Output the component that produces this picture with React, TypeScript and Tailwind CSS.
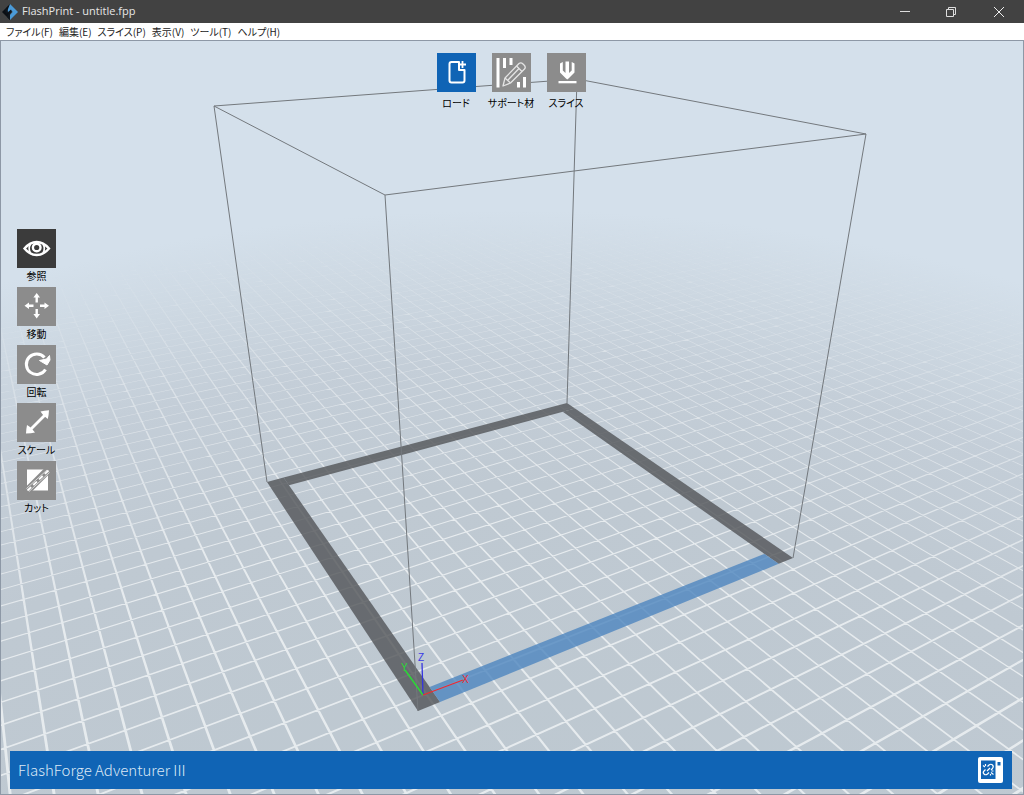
import type { ReactNode } from "react";

type Point = [number, number];

// Perspective projection of the build plate: (0,0) is the origin corner, (1,1) the far corner
const project = (u: number, v: number): Point => {
  const w = 1 + 0.2529 * u + 0.44052 * v;
  return [(575.55 * u - 33.38 * v + 418) / w, (-11.88 * u - 16.67 * v + 711) / w];
};

const quad = (points: Point[]) =>
  "M" + points.map(([u, v]) => project(u, v).map((n) => n.toFixed(2)).join(" ")).join("L") + "Z";

const CELL = 1 / 15;
const HALF_LINE = 0.0023;

const buildGrid = () => {
  const parts: string[] = [];
  for (let i = -75; i < 150; i++) {
    const c = (i + 0.5) * CELL;
    // lines along u
    const u0 = (-0.35 - 0.44052 * c) / 0.2529;
    const u1 = (2.6 - 0.44052 * c) / 0.2529;
    parts.push(quad([[u0, c - HALF_LINE], [u1, c - HALF_LINE], [u1, c + HALF_LINE], [u0, c + HALF_LINE]]));
    // lines along v, same winding so crossings stay filled
    const v0 = (-0.35 - 0.2529 * c) / 0.44052;
    const v1 = (2.6 - 0.2529 * c) / 0.44052;
    parts.push(quad([[c - HALF_LINE, v0], [c + HALF_LINE, v0], [c + HALF_LINE, v1], [c - HALF_LINE, v1]]));
  }
  return parts.join("");
};

const gridPath = buildGrid();
const T = 0.0475;

const Scene = () => (
  <svg
    className="absolute inset-0 w-full h-full"
    viewBox="1 41 1022 753"
    preserveAspectRatio="xMidYMid slice"
    aria-hidden="true"
  >
    <defs>
      <radialGradient id="ground" gradientUnits="userSpaceOnUse" cx="0" cy="0" r="1" gradientTransform="translate(512 900) scale(1140 690)">
        <stop offset="0" stopColor="#bdc8d0" />
        <stop offset="0.6" stopColor="#bfc9d2" />
        <stop offset="0.78" stopColor="#c4ced8" />
        <stop offset="0.9" stopColor="#cdd8e2" />
        <stop offset="1" stopColor="#d4e0eb" />
      </radialGradient>
      <radialGradient id="fog" gradientUnits="userSpaceOnUse" cx="0" cy="0" r="1" gradientTransform="translate(512 900) scale(1140 690)">
        <stop offset="0" stopColor="#fff" />
        <stop offset="0.55" stopColor="#fff" />
        <stop offset="0.8" stopColor="#999" />
        <stop offset="0.92" stopColor="#3c3c3c" />
        <stop offset="1" stopColor="#000" />
      </radialGradient>
      <mask id="fade" maskUnits="userSpaceOnUse" x="0" y="0" width="1024" height="800">
        <rect width="1024" height="800" fill="url(#fog)" />
      </mask>
    </defs>

    <rect width="1024" height="800" fill="url(#ground)" />
    <g mask="url(#fade)">
      <path d={gridPath} fill="#f4f7f8" fillOpacity="0.74" />
    </g>

    {/* Plate frame */}
    <g fill="#54575a" fillOpacity="0.82">
      <path d={quad([[0, 0], [0, 1], [T, 1], [T, 0]])} />
      <path d={quad([[T, 1 - T], [T, 1], [1, 1], [1, 1 - T]])} />
      <path d={quad([[1 - T, 0], [1 - T, 1 - T], [1, 1 - T], [1, 0]])} />
    </g>
    <path d={quad([[T, 0], [T, T], [1 - T, T], [1 - T, 0]])} fill="#5088bf" fillOpacity="0.82" />

    {/* Build volume */}
    <g fill="none" stroke="#73787d" strokeWidth="1">
      <path d="M385 195 214 106 577 79 866 134Z" />
      <path d="M385 195 418 711M866 134 793 558M577 79 567 403M214 106 267 482" />
    </g>

    {/* Axes */}
    <g fill="none" strokeWidth="1">
      <path d="M423 695 422 663" stroke="#3434e0" strokeWidth="1.3" />
      <path d="M423 695 405 670" stroke="#2bd836" strokeWidth="1.5" />
      <path d="M423 695 463 680" stroke="#f0282e" strokeWidth="1.2" />
    </g>
    <g className="font-['Liberation_Sans'] text-[10px]">
      <text x="418" y="661" fill="#3a3ae6">Z</text>
      <text x="401" y="671" fill="#2bd836">Y</text>
      <text x="462" y="683" fill="#f0282e">X</text>
    </g>
  </svg>
);

const LoadIcon = () => (
  <g fill="none" stroke="#fff" strokeWidth="2">
    <path d="M22 9H14.500A2 2 0 0 0 12.500 11V27.500A2 2 0 0 0 14.500 29.500H25.500A2 2 0 0 0 27.500 27.500V17H22Z" strokeLinejoin="round" />
    <path d="M25.500 8v7M22 11.500h7" strokeWidth="1.800" />
  </g>
);

const SupportIcon = () => (
  <g>
    <path fill="#fff" d="M4.500 5h3v29.500h-3zM11 5h3v10h-3zM17.500 5h3v7h-3zM25 29h3v5.500h-3zM31 24h3v10.500h-3z" />
    <g fill="#8c8c8c" stroke="#e4e4e4" strokeWidth="1.300" strokeLinejoin="round">
      <path d="M11 33 13 25 27 10.500Q29 9 31 11L32.500 12.500Q34 14.500 32.500 16L18.500 30Z" />
      <path d="M13 25 18.500 30M24.500 13 30 18.500M15.500 27.500 27 15.500" />
    </g>
  </g>
);

const SliceIcon = () => (
  <g>
    <path fill="#fff" d="M13 10.500 15.800 9V17.500L18.500 20V8.500H22V20L24.700 17.500V9L27.500 10.500V19.500L21.500 25.500 20.250 26.500 19 25.500 13 19.500Z" />
    <path fill="#fff" d="M11.500 28h18v2.300h-18z" />
  </g>
);

const EyeIcon = () => (
  <g fill="none" stroke="#fff">
    <path d="M7.500 19.500Q13 13 19.700 13T32 19.500Q26.500 26 19.700 26T7.500 19.500Z" strokeWidth="2.400" />
    <path d="M13.500 15Q10.800 19.500 13.500 24M26 15Q28.700 19.500 26 24" strokeWidth="1.800" />
    <circle cx="19.700" cy="18.500" r="3.800" strokeWidth="2.400" />
  </g>
);

const MoveIcon = () => (
  <g stroke="#fff" strokeWidth="2.400">
    <path d="M19.700 15.500V9M19.700 22v6.500M16.500 18.700H10M23 18.700h6.500" />
    <path
      fill="#fff"
      stroke="none"
      d="M19.700 6 23 10.500h-6.600zM19.700 31.500 23 27h-6.600zM7.500 18.700 12 15.400v6.600zM32 18.700 27.500 15.400v6.600z"
    />
  </g>
);

const RotateIcon = () => (
  <g>
    <path d="M28.500 24.500A10.300 10.300 0 1 1 27.500 12.500" fill="none" stroke="#fff" strokeWidth="3" />
    <path d="M22.500 15.500 29.500 14 32.500 10.500 33 15 30 20Z" fill="#fff" stroke="#fff" strokeWidth="1" strokeLinejoin="round" />
  </g>
);

const ScaleIcon = () => (
  <g fill="#fff">
    <path d="M12 28 29 11" stroke="#fff" strokeWidth="2.800" />
    <path d="M23.500 8.500Q27 7.500 32 7.300 31.800 12 30.800 16L28 13.800 25.500 11.300ZM9 30.500Q9.200 26 10 22L13 24 15.500 26.500 18 29.500Q14 30.300 9 30.500Z" />
  </g>
);

const CutIcon = () => (
  <g>
    <path fill="#fff" d="M10 8.500h21V29.500H10z" />
    <path d="M8.500 31.500 33 7" stroke="#8c8c8c" strokeWidth="7.500" />
    <path d="M9.500 27.500 30 9M12 30.500 32.500 11.500" stroke="#d8d8d8" strokeWidth="1" />
    <path d="M10.500 29.500 32 9" stroke="#fff" strokeWidth="1.800" strokeDasharray="5 3" />
  </g>
);

interface ToolProps {
  label: string;
  icon: ReactNode;
  color?: string;
  labelGap?: string;
}

const Tool = ({ label, icon, color = "bg-[#8c8c8c]", labelGap = "" }: ToolProps) => (
  <button type="button" className="flex flex-col items-center w-[39px]">
    <span className={`block w-[39px] h-[39px] ${color}`}>
      <svg className="w-full h-full" viewBox="0 0 39 39" aria-hidden="true">
        {icon}
      </svg>
    </span>
    <span className={`text-[10px] leading-4 whitespace-nowrap text-black ${labelGap}`}>{label}</span>
  </button>
);

const menus = ["ファイル(F)", "編集(E)", "スライス(P)", "表示(V)", "ツール(T)", "ヘルプ(H)"];

const sideTools = [
  { label: "参照", icon: <EyeIcon />, color: "bg-[#3b3b3b]" },
  { label: "移動", icon: <MoveIcon /> },
  { label: "回転", icon: <RotateIcon /> },
  { label: "スケール", icon: <ScaleIcon /> },
  { label: "カット", icon: <CutIcon /> },
];

const topTools = [
  { label: "ロード", icon: <LoadIcon />, color: "bg-[#1064b5]" },
  { label: "サポート材", icon: <SupportIcon /> },
  { label: "スライス", icon: <SliceIcon /> },
];

const App = () => {
  return (
    <div className="flex flex-col h-screen overflow-hidden font-['Noto_Sans_CJK_JP',sans-serif] [font-feature-settings:'palt']">
      {/* Title bar */}
      <header className="flex items-center h-[23px] bg-[#424242] text-white">
        <svg className="w-4 h-4 ml-0.5" viewBox="0 0 16 16" aria-hidden="true">
          <path d="M8 0 0 8l8 8V9L5 8l3-3z" fill="#0b0f14" />
          <path d="M8 0l8 8-8 8V11l3-3.500L8 8 5 9l1-4z" fill="#4a9ad8" />
          <path d="M8 0 4.500 3.500 6 8l3-2.500 1 2L8 10v6l-3-3 2-4-3 .5L3 6z" fill="#10161d" />
        </svg>
        <h1 className="ml-1 text-[11px] font-['Open_Sans',sans-serif] text-[#e6e6e6]">FlashPrint - untitle.fpp</h1>
        <div className="flex h-full ml-auto">
          <button type="button" aria-label="Minimize" className="flex items-center justify-center w-[46px]">
            <svg className="w-3 h-3" viewBox="0 0 12 12" fill="none" stroke="#ddd">
              <path d="M1 5.500h10" />
            </svg>
          </button>
          <button type="button" aria-label="Restore" className="flex items-center justify-center w-[46px]">
            <svg className="w-3 h-3" viewBox="0 0 12 12" fill="none" stroke="#ddd">
              <path d="M1.500 3.500h7v7h-7zM3.500 3.500v-2h7v7h-2" />
            </svg>
          </button>
          <button type="button" aria-label="Close" className="flex items-center justify-center w-[50px]">
            <svg className="w-3 h-3" viewBox="0 0 12 12" fill="none" stroke="#eee">
              <path d="M1 1l10 10M11 1 1 11" />
            </svg>
          </button>
        </div>
      </header>

      {/* Menu bar */}
      <nav className="flex items-center h-[17px] pl-1.5 gap-1.5 bg-white text-[10px] leading-4 text-[#222]">
        {menus.map((menu) => (
          <button key={menu} type="button" className="whitespace-nowrap">
            {menu}
          </button>
        ))}
      </nav>

      {/* Viewport */}
      <main className="relative flex-1 min-h-0 border border-[#8d98a6]">
        <Scene />
        <div className="relative flex flex-col h-full pt-3 pl-[9px] pr-[11px] pb-[5px]">
          <div className="flex justify-center gap-4">
            {topTools.map((tool) => (
              <Tool key={tool.label} {...tool} labelGap="mt-[3px]" />
            ))}
          </div>
          <div className="flex flex-col gap-[3px] mt-[118px] pl-[7px]">
            {sideTools.map((tool) => (
              <Tool key={tool.label} {...tool} />
            ))}
          </div>
          <footer className="flex items-center justify-between h-[38px] mt-auto pl-2 pr-[9px] bg-[#1064b5]">
            <span className="text-[15px] font-light text-[#dbe8f5]">FlashForge Adventurer III</span>
            <button type="button" aria-label="Connection">
              <svg className="w-[25px] h-[26px]" viewBox="0 0 25 26" fill="none">
                <rect width="25" height="26" rx="2" fill="#fff" />
                <path d="M3 3.500h14.500V22H3zM19.500 5h3v3.500h-3z" fill="#1064b5" />
                <g stroke="#fff" strokeWidth="1.200">
                  <path d="M9.500 9.500 11 8q2-1.500 3.500 0t0 3.500L13 13M11 15.500 9.500 17q-2 1.500-3.500 0t0-3L7.500 12.500M9 14l3-3" />
                  <path d="M5 8.500l2 1.500M7.500 7v2M13 15.500l2.500 2M12.500 17v1.500M13.500 14h2" />
                </g>
              </svg>
            </button>
          </footer>
        </div>
      </main>
    </div>
  );
};

export default App;
